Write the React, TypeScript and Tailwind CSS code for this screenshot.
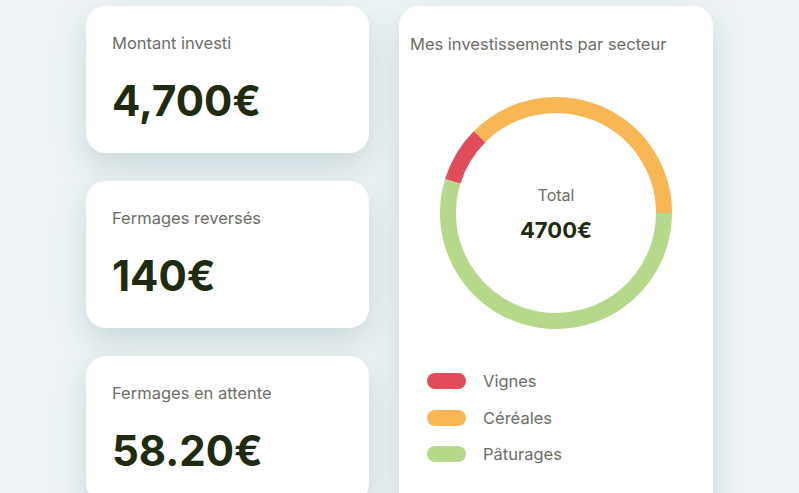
import React from "react"

const font = { fontFamily: "Inter, 'Liberation Sans', sans-serif" }

const stats = [
  { label: "Montant investi", value: "4,700€" },
  { label: "Fermages reversés", value: "140€" },
  { label: "Fermages en attente", value: "58.20€" },
]

const sectors = [
  { name: "Vignes", color: "#e24b5a", from: 287, to: 315 },
  { name: "Céréales", color: "#f9b655", from: 315, to: 450 },
  { name: "Pâturages", color: "#b6d88b", from: 90, to: 287 },
]

// point on circle, angle in degrees clockwise from top
const pt = (cx: number, cy: number, r: number, a: number) => {
  const rad = ((a - 90) * Math.PI) / 180
  return [cx + r * Math.cos(rad), cy + r * Math.sin(rad)]
}

const arc = (cx: number, cy: number, r: number, a1: number, a2: number) => {
  const [x1, y1] = pt(cx, cy, r, a1)
  const [x2, y2] = pt(cx, cy, r, a2)
  const large = a2 - a1 > 180 ? 1 : 0
  return `M ${x1} ${y1} A ${r} ${r} 0 ${large} 1 ${x2} ${y2}`
}

function StatCard({ label, value }: { label: string; value: string }) {
  return (
    <div className="h-[147px] shrink-0 rounded-[20px] bg-white pl-[26px] pt-[27px] shadow-[0_12px_30px_rgba(130,160,170,0.35)]">
      <p className="text-[16.5px] leading-[20px] text-[#6d6e66]">{label}</p>
      <p className="mt-[24px] text-[42px] font-bold leading-[48px] text-[#1f2b0f]">{value}</p>
    </div>
  )
}

export default function App() {
  return (
    <div className="h-[493px] w-[799px] overflow-hidden bg-[#eef4f5]" style={font}>
      <div className="flex pl-[86px] pt-[6px]">
        <div className="flex w-[283px] flex-col gap-[28px]">
          {stats.map((s) => (
            <StatCard key={s.label} label={s.label} value={s.value} />
          ))}
        </div>

        <div className="ml-[30px] h-[540px] w-[314px] rounded-[20px] bg-white pt-[28px] shadow-[0_12px_30px_rgba(130,160,170,0.35)]">
          <p className="pl-[11px] text-[16.5px] leading-[20px] text-[#6d6e66]">Mes investissements par secteur</p>

          <div className="relative mx-auto mt-[41px] h-[236px] w-[236px]">
            <svg width="236" height="236" viewBox="0 0 236 236">
              {sectors.map((s) => (
                <path key={s.name} d={arc(118, 118, 108, s.from, s.to)} fill="none" stroke={s.color} strokeWidth="16" />
              ))}
            </svg>
            <div className="absolute inset-0 flex flex-col items-center justify-center pt-[2px]">
              <p className="text-[16px] leading-[20px] text-[#6d6e66]">Total</p>
              <p className="mt-[12px] text-[22px] font-bold leading-[26px] text-[#1f2b0f]">4700€</p>
            </div>
          </div>

          <div className="mt-[42px] flex flex-col gap-[20.5px] pl-[28px]">
            {sectors.map((s) => (
              <div key={s.name} className="flex items-center gap-[17px]">
                <span className="h-[16px] w-[39px] rounded-full" style={{ backgroundColor: s.color }} />
                <span className="text-[16.5px] leading-[16px] text-[#6d6e66]">{s.name}</span>
              </div>
            ))}
          </div>
        </div>
      </div>
    </div>
  )
}
